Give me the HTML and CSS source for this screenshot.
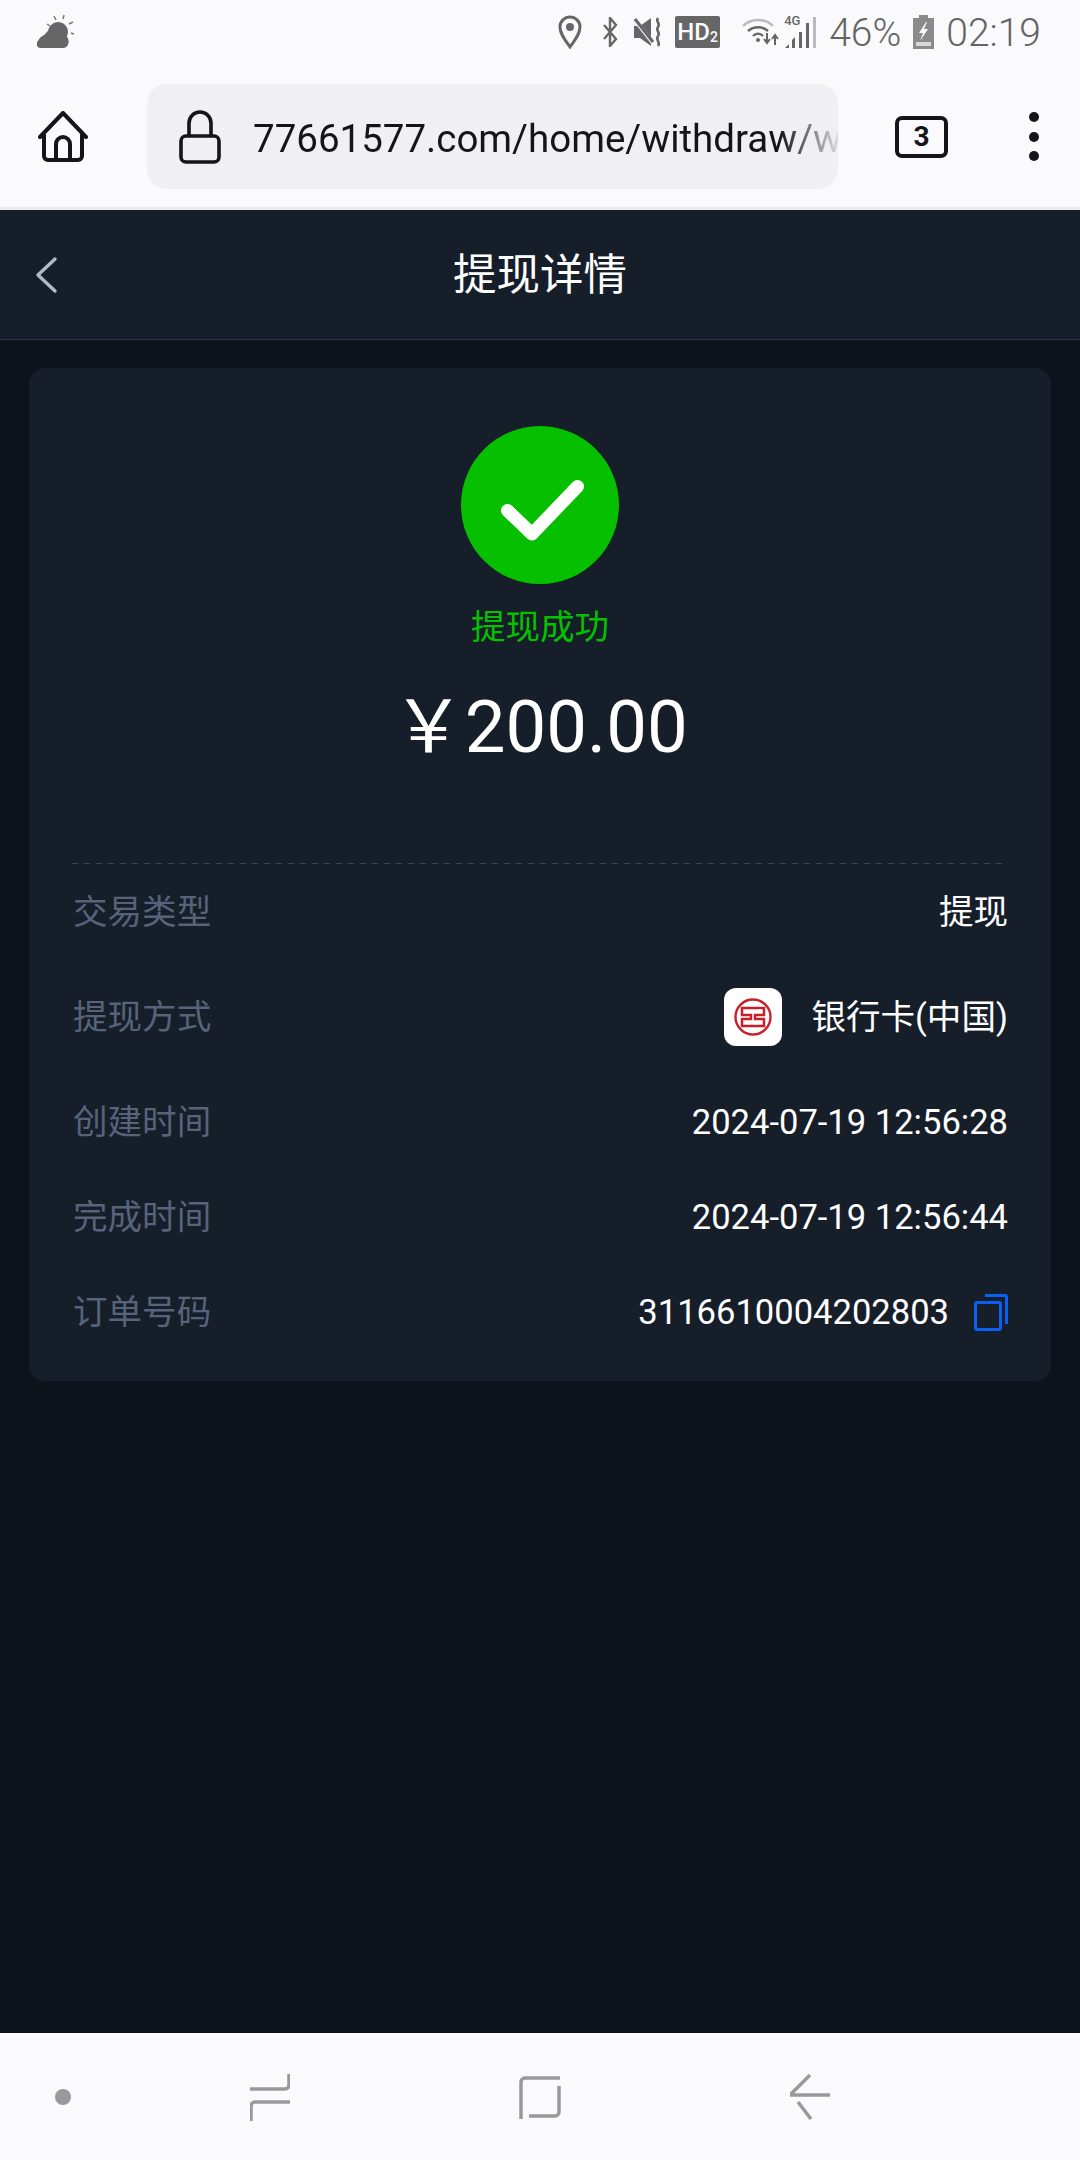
FILE: index.html
```html
<!DOCTYPE html>
<html lang="zh-CN">
<head>
  <meta charset="UTF-8" />
  <meta name="viewport" content="width=device-width, initial-scale=1.0" />
  <title>提现详情</title>
  <link rel="stylesheet" href="styles.css">
</head>
<body>
<div class="phone">
  <div class="statusbar">
    <svg class="weather" width="38" height="34" viewBox="0 0 38 34">
      <path d="M4 33a4 4 0 0 1-3-7c1-3 4-5 6-6 2-1 2-3 4-4 1-5 5-9 10-9s10 4 10 10c0 2-1 3-1 5 3 3 2 11-4 11z" fill="#666"/>
      <path d="M17 1l2 4M27 0l-1 4M36 7l-4 2M37 19l-3-1M10 9l3 2" stroke="#777" stroke-width="1.5" fill="none"/>
    </svg>
    <div class="status-right">
      <svg class="ic-loc" width="24" height="34" viewBox="0 0 24 34">
        <path d="M12 32C7 25 2 19 2 12a10 10 0 0 1 20 0c0 7-5 13-10 20z" fill="none" stroke="#666" stroke-width="3"/>
        <circle cx="12" cy="12" r="4" fill="#666"/>
      </svg>
      <svg class="ic-bt" width="16" height="30" viewBox="0 0 16 30">
        <path d="M2 8l12 14-6 7V1l6 7L2 22" fill="none" stroke="#666" stroke-width="2.4"/>
      </svg>
      <svg class="ic-mute" width="28" height="30" viewBox="0 0 28 30">
        <path d="M0 9h6l11-8v28L6 21H0z" fill="#666"/>
        <path d="M1 3l18 23" stroke="#fafafc" stroke-width="4"/>
        <path d="M1 2l18 23" stroke="#666" stroke-width="3"/>
        <path d="M24 1c-3 4 3 5 0 9s3 5 0 9 3 6 0 10" fill="none" stroke="#666" stroke-width="2.6"/>
      </svg>
      <div class="hd-badge">HD<sub>2</sub></div>
      <svg class="ic-wifi" width="38" height="32" viewBox="0 0 38 32">
        <path d="M1 10c8-8 22-8 30 0" fill="none" stroke="#bbb" stroke-width="2.4"/>
        <path d="M6 15c6-5 14-5 20 0" fill="none" stroke="#666" stroke-width="2.4"/>
        <path d="M11 20c3-3 7-3 10 0" fill="none" stroke="#666" stroke-width="2.4"/>
        <circle cx="16" cy="24" r="2" fill="#666"/>
        <path d="M25 17v9m-3-3l3 4 3-4M33 29v-9m-3 3l3-4 3 4" fill="none" stroke="#666" stroke-width="2"/>
      </svg>
      <div class="signal">
        <span class="signal-label">4G</span>
        <svg width="32" height="32" viewBox="0 0 32 32">
          <path d="M1 32l4-4v4zM8 32v-8l3-3v11zM15 32V16h3v16zM22 32V7h3v25z" fill="#666"/>
          <path d="M29 32V1h3v31z" fill="#bbb"/>
        </svg>
      </div>
      <span class="status-text pct">46%</span>
      <svg class="ic-batt" width="21" height="34" viewBox="0 0 21 34">
        <path d="M6 0h9v3h6v31H0V3h6z" fill="#8a8a8a"/>
        <path d="M3 27h15v4H3z" fill="#d8d8d8"/>
        <path d="M13 7l-7 11h4l-3 8 8-12h-4l3-7z" fill="#fafafc"/>
      </svg>
      <span class="status-text clock">02:19</span>
    </div>
  </div>

  <div class="toolbar">
    <svg class="ic-home" width="50" height="52" viewBox="0 0 50 52">
      <path d="M2 26L25 2l23 24M6 24v21a4 4 0 0 0 4 4h30a4 4 0 0 0 4-4V24" fill="none" stroke="#15141a" stroke-width="4" stroke-linecap="round" stroke-linejoin="round"/>
      <path d="M18 48V33a7 7 0 0 1 14 0v15" fill="none" stroke="#15141a" stroke-width="4"/>
    </svg>
    <div class="urlbar">
      <svg class="ic-lock" width="42" height="54" viewBox="0 0 42 54">
        <rect x="2" y="26" width="38" height="26" rx="5" fill="none" stroke="#15141a" stroke-width="3.6"/>
        <path d="M10 26V13a11 11 0 0 1 22 0v13" fill="none" stroke="#15141a" stroke-width="3.6"/>
      </svg>
      <div class="url">77661577.com/home/withdraw/w</div>
    </div>
    <div class="tabs-btn">3</div>
    <div class="menu-btn"><i></i><i></i><i></i></div>
  </div>

  <div class="header">
    <svg class="ic-back" width="24" height="38" viewBox="0 0 24 38">
      <path d="M21 3L4 19l17 16" fill="none" stroke="#b2bac6" stroke-width="3.4" stroke-linecap="round" stroke-linejoin="round"/>
    </svg>
    <div class="header-title">提现详情</div>
  </div>

  <div class="main">
    <div class="card">
      <div class="result">
        <svg width="158" height="158" viewBox="0 0 158 158">
          <circle cx="79" cy="79" r="79" fill="#06c000"/>
          <path d="M46.500 84.500L71 108l45.500-47.500" fill="none" stroke="#fff" stroke-width="13" stroke-linecap="round" stroke-linejoin="round"/>
        </svg>
        <div class="result-text">提现成功</div>
        <div class="amount">&#xFFE5;200.00</div>
      </div>
      <div class="divider"></div>
      <div class="rows">
        <div class="row">
          <span class="label">交易类型</span>
          <span class="value">提现</span>
        </div>
        <div class="row">
          <span class="label">提现方式</span>
          <span class="value bank">
            <span class="bank-logo">
              <svg width="38" height="38" viewBox="0 0 38 38">
                <circle cx="19" cy="19" r="17.5" fill="none" stroke="#c8202a" stroke-width="2.4"/>
                <path d="M17 10H8v7h9v4H8v7h9M21 10h9v7h-9v4h9v7h-9M17 10h4M17 28h4" fill="none" stroke="#c8202a" stroke-width="2.5"/>
              </svg>
            </span>
            银行卡(中国)
          </span>
        </div>
        <div class="row">
          <span class="label">创建时间</span>
          <span class="value">2024-07-19 12:56:28</span>
        </div>
        <div class="row">
          <span class="label">完成时间</span>
          <span class="value">2024-07-19 12:56:44</span>
        </div>
        <div class="row">
          <span class="label">订单号码</span>
          <span class="value order">
            3116610004202803
            <svg width="34" height="37" viewBox="0 0 34 37">
              <rect x="1.500" y="8.500" width="25" height="27" rx="1.500" fill="none" stroke="#0a5ff5" stroke-width="3"/>
              <path d="M11 1.500h20a1.500 1.500 0 0 1 1.500 1.500v27" fill="none" stroke="#0a5ff5" stroke-width="3"/>
            </svg>
          </span>
        </div>
      </div>
    </div>
  </div>

  <div class="navbar">
    <span class="nav-dot"></span>
    <svg width="40" height="48" viewBox="0 0 40 48">
      <path d="M39 1v11a4 4 0 0 1-4 4H0M40 29H5a4 4 0 0 0-4 4v15" fill="none" stroke="#999" stroke-width="3.500"/>
    </svg>
    <svg width="42" height="44" viewBox="0 0 42 44">
      <path d="M41 3H6a4 4 0 0 0-4 4v37M10 41h26a4 4 0 0 0 4-4V11" fill="none" stroke="#999" stroke-width="3.500"/>
    </svg>
    <svg width="40" height="46" viewBox="0 0 40 46">
      <path d="M20 1L1 20v1h39M8 28l13 17" fill="none" stroke="#999" stroke-width="3.500"/>
    </svg>
  </div>
</div>
</body>
</html>
```

FILE: styles.css
```css
html, body {
  margin: 0;
  padding: 0;
  height: 100%;
  background: #0e121a;
  font-family: Roboto, "Noto Sans CJK SC", sans-serif;
}

svg {
  display: block;
  flex: none;
}

.phone {
  width: 1080px;
  height: 2160px;
  display: flex;
  flex-direction: column;
  overflow: hidden;
}

/* status bar */
.statusbar {
  height: 64px;
  background: #fafafc;
  display: flex;
  align-items: center;
  justify-content: space-between;
  padding: 0 39px 0 37px;
  box-sizing: border-box;
}

.status-right {
  display: flex;
  align-items: center;
}

.status-text {
  margin-top: 3px;
  font-size: 39px;
  font-weight: 300;
  color: #646464;
  line-height: 1;
}

.ic-bt { margin-left: 20px; }
.ic-mute { margin-left: 16px; }
.ic-wifi { margin-left: 22px; }
.pct { margin-left: 13px; }
.ic-batt { margin-left: 12px; }
.clock { margin-left: 12px; }

.hd-badge {
  margin-left: 13px;
  width: 45px;
  height: 32px;
  background: #666;
  border-radius: 2px;
  color: #fafafc;
  font-size: 24px;
  line-height: 32px;
  font-weight: 500;
  text-align: center;
}

.hd-badge sub {
  font-size: 14px;
  line-height: 0;
  vertical-align: -2px;
}

.signal {
  position: relative;
  margin-left: 4px;
}

.signal-label {
  position: absolute;
  left: 0;
  top: -2px;
  font-size: 13px;
  line-height: 14px;
  font-weight: 500;
  color: #666;
}

/* browser toolbar */
.toolbar {
  height: 143px;
  background: #fafafc;
  display: flex;
  align-items: center;
  padding: 2px 0 0 38px;
  box-sizing: border-box;
}

.urlbar {
  margin-left: 59px;
  width: 691px;
  height: 105px;
  background: #f0f0f4;
  border-radius: 20px;
  display: flex;
  align-items: center;
  padding-left: 32px;
  box-sizing: border-box;
  flex: none;
}

.url {
  margin-left: 32px;
  padding-top: 3px;
  flex: 1;
  min-width: 0;
  overflow: hidden;
  white-space: nowrap;
  font-size: 38.5px;
  color: #15141a;
  -webkit-mask-image: linear-gradient(to right, #000 90%, rgba(0, 0, 0, 0.1) 100%);
  mask-image: linear-gradient(to right, #000 90%, rgba(0, 0, 0, 0.1) 100%);
}

.tabs-btn {
  margin-left: 57px;
  width: 53px;
  height: 42px;
  border: 4px solid #15141a;
  border-radius: 7px;
  box-sizing: border-box;
  font-size: 28px;
  font-weight: 700;
  line-height: 34px;
  text-align: center;
  color: #15141a;
}

.menu-btn {
  margin-left: 81px;
  display: flex;
  flex-direction: column;
  gap: 9.5px;
}

.menu-btn i {
  width: 10px;
  height: 10px;
  background: #15141a;
  border-radius: 50%;
}

/* page header */
.header {
  margin-top: 3px;
  height: 130px;
  padding-bottom: 6px;
  background: #161e29;
  border-bottom: 1px solid #2a3445;
  box-sizing: border-box;
  position: relative;
  display: flex;
  align-items: center;
  justify-content: center;
  box-shadow: 0 -3px 0 #ececf0;
}

.ic-back {
  position: absolute;
  left: 34px;
  top: 46px;
}

.header-title {
  font-size: 43.5px;
  color: #fff;
}

/* detail card */
.main {
  flex: 1;
  padding: 28px 29px 0;
}

.card {
  background: #161e29;
  border-radius: 16px;
  padding: 58px 44px 50px;
}

.result {
  display: flex;
  flex-direction: column;
  align-items: center;
  padding-bottom: 93px;
}

.result-text {
  margin-top: 23px;
  font-size: 34.56px;
  line-height: 40px;
  color: #06c000;
}

.amount {
  margin-top: 39px;
  font-size: 72.5px;
  line-height: 84px;
  color: #fff;
}

.divider {
  height: 1px;
  margin: 0 -1px;
  background: repeating-linear-gradient(to right, #35455c 0, #35455c 6px, transparent 6px, transparent 12px);
}

.rows {
  display: flex;
  flex-direction: column;
  gap: 57px;
  padding-top: 29px;
  margin-right: -1px;
}

.row {
  display: flex;
  align-items: center;
  justify-content: space-between;
  min-height: 38px;
  font-size: 34.56px;
  line-height: 38px;
}

.label {
  color: #56637a;
}

.value {
  color: #fff;
}

.bank,
.order {
  display: flex;
  align-items: center;
}

.bank-logo {
  width: 58px;
  height: 58px;
  margin-right: 29px;
  background: #fff;
  border-radius: 12px;
  display: flex;
  align-items: center;
  justify-content: center;
}

.order svg {
  margin-left: 25px;
}

/* system navigation */
.navbar {
  height: 127px;
  background: #fafafc;
  display: flex;
  align-items: center;
  padding-left: 55px;
  box-sizing: border-box;
}

.nav-dot {
  width: 16px;
  height: 16px;
  background: #999;
  border-radius: 50%;
}

.navbar svg:nth-of-type(1) { margin-left: 179px; }
.navbar svg:nth-of-type(2) { margin-left: 229px; }
.navbar svg:nth-of-type(3) { margin-left: 229px; }
```
